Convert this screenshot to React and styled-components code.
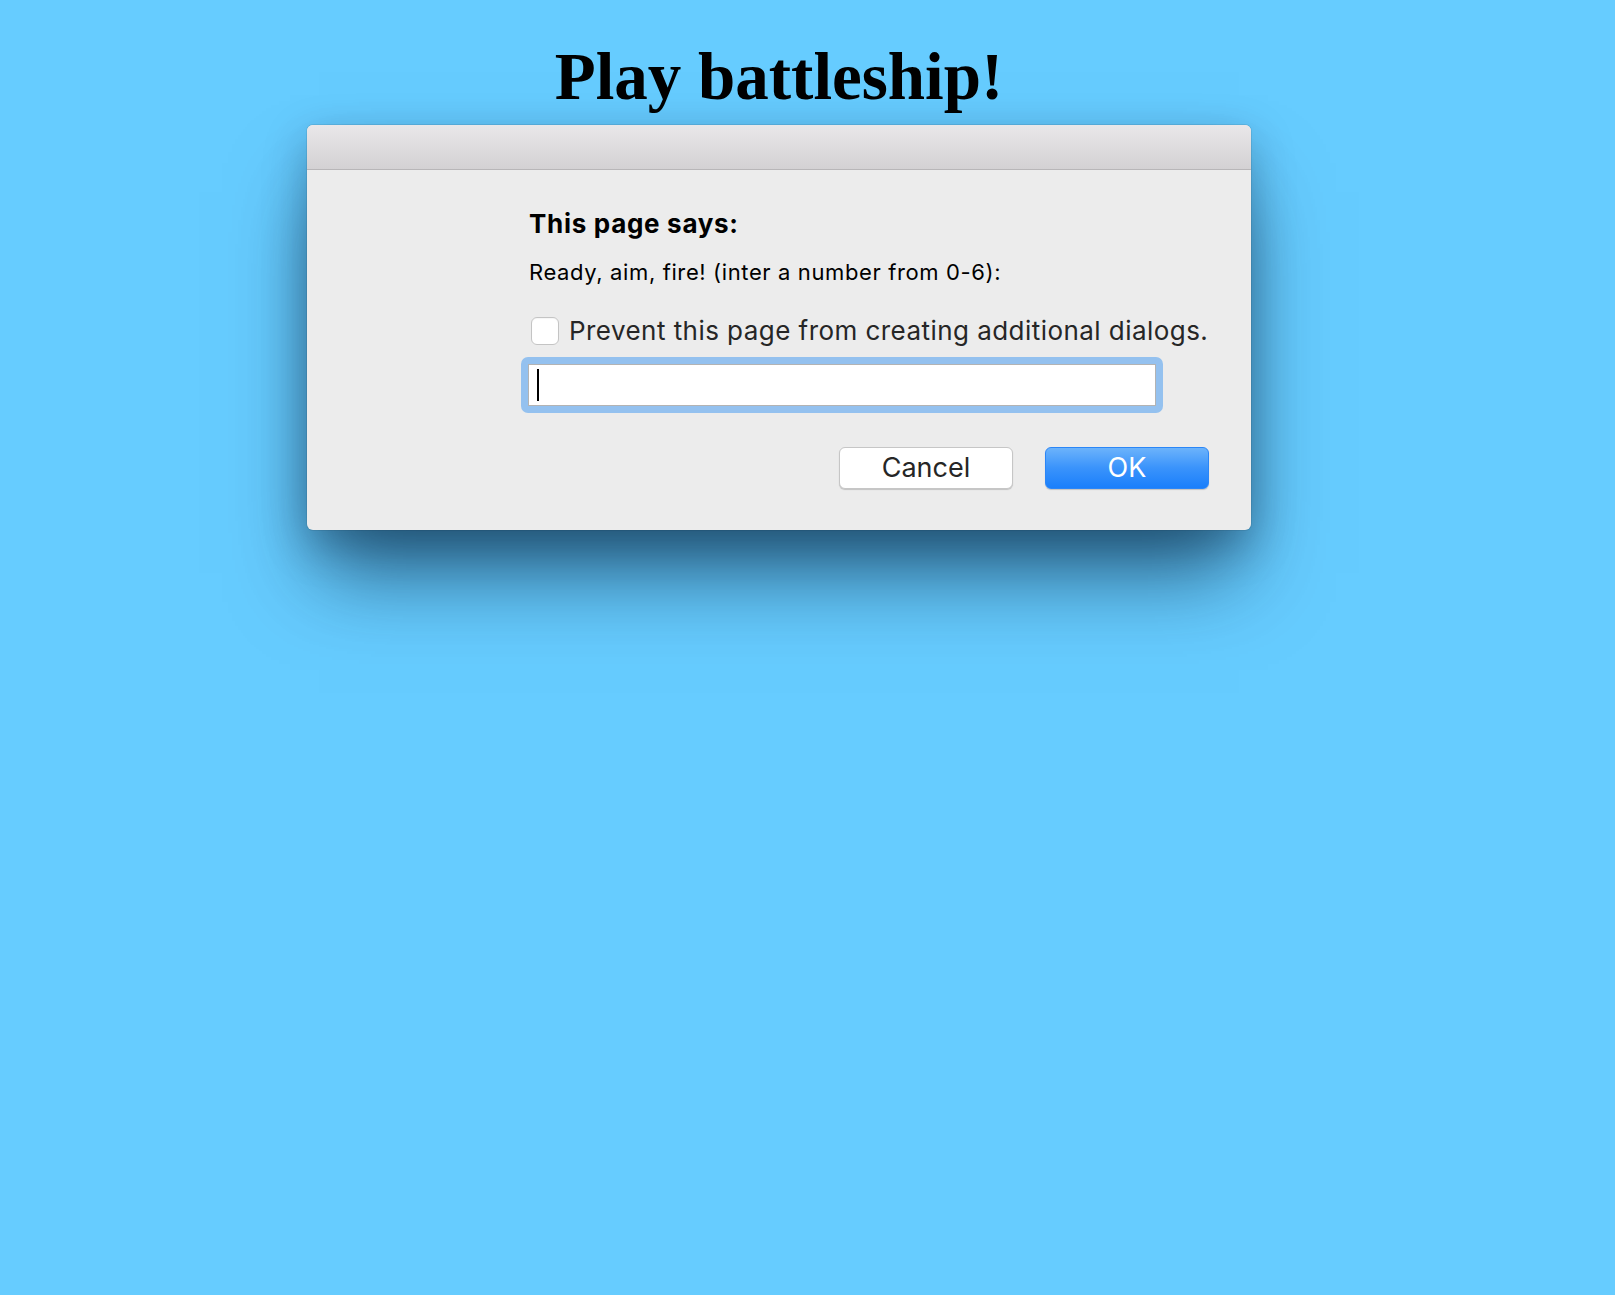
import React from 'react';
import styled, { createGlobalStyle } from 'styled-components';

const GlobalStyle = createGlobalStyle`
  html, body {
    margin: 0;
    padding: 0;
    background: #66ccff;
  }
  body {
    min-height: 100vh;
  }
`;

const Page = styled.div`
  display: flex;
  flex-direction: column;
  align-items: center;
  min-height: 100vh;
  padding: 43px 57px 0 0;
  box-sizing: border-box;
  background: #66ccff;
`;

const Title = styled.h1`
  margin: 0 0 16px;
  font-family: "Liberation Serif", "Times New Roman", serif;
  font-size: 67px;
  font-weight: 700;
  line-height: 66px;
  color: #000;
`;

const Dialog = styled.div`
  width: 944px;
  border-radius: 6px;
  overflow: hidden;
  background: #ececec;
  box-shadow: 0 55px 80px -12px rgba(0, 25, 50, 0.6),
    0 14px 44px rgba(0, 20, 45, 0.28), 0 0 0 1px rgba(0, 0, 0, 0.08);
`;

const TitleBar = styled.div`
  height: 44px;
  background: linear-gradient(to bottom, #e9e7e9 0%, #d3d1d3 100%);
  border-bottom: 1px solid #b8b6b8;
`;

const Body = styled.div`
  display: flex;
  flex-direction: column;
  padding: 39px 42px 41px 222px;
  font-family: Inter, "Liberation Sans", Arial, sans-serif;
  color: #000;
`;

const Heading = styled.div`
  font-size: 26px;
  font-weight: 700;
  line-height: 30px;
  letter-spacing: 0.7px;
`;

const Message = styled.div`
  margin-top: 20px;
  font-size: 22px;
  line-height: 26px;
  letter-spacing: 0.62px;
`;

const CheckRow = styled.label`
  display: flex;
  align-items: center;
  gap: 10px;
  margin-top: 32px;
  height: 28px;
  font-size: 26px;
  line-height: 28px;
  letter-spacing: 0.45px;
  color: #262626;
`;

const Box = styled.span`
  width: 28px;
  height: 28px;
  margin-left: 2px;
  box-sizing: border-box;
  border: 1px solid #c4c4c4;
  border-radius: 6px;
  background: #fff;
  box-shadow: inset 0 1px 1px rgba(0, 0, 0, 0.04);
  flex-shrink: 0;
`;

const FocusRing = styled.div`
  display: flex;
  width: 642px;
  margin: 12px 0 0 -8px;
  padding: 7px;
  box-sizing: border-box;
  border-radius: 7px;
  background: #94c1ef;
`;

const Field = styled.div`
  display: flex;
  align-items: center;
  flex: 1;
  height: 42px;
  padding-left: 8px;
  box-sizing: border-box;
  background: #fff;
  border: 1px solid #b3b3b3;
`;

const Caret = styled.span`
  width: 2px;
  height: 32px;
  background: #000;
`;

const Buttons = styled.div`
  display: flex;
  justify-content: flex-end;
  gap: 32px;
  margin-top: 34px;
`;

const Button = styled.button`
  width: ${(p) => p.$width}px;
  height: 42px;
  padding: 0;
  border-radius: 6px;
  font-family: Inter, "Liberation Sans", Arial, sans-serif;
  font-size: 27px;
  line-height: 40px;
  cursor: pointer;
  color: ${(p) => (p.$primary ? '#ffffff' : '#262626')};
  border: 1px solid ${(p) => (p.$primary ? '#2b86f7' : '#c6c6c6')};
  background: ${(p) =>
    p.$primary
      ? 'linear-gradient(to bottom, #6cb3fb 0%, #3a93fb 50%, #1a7ffb 100%)'
      : '#ffffff'};
  box-shadow: 0 1px 1px rgba(0, 0, 0, 0.18);
`;

export default function App() {
  return (
    <>
      <GlobalStyle />
      <Page>
        <Title>Play battleship!</Title>
        <Dialog>
          <TitleBar />
          <Body>
            <Heading>This page says:</Heading>
            <Message>Ready, aim, fire! (inter a number from 0-6):</Message>
            <CheckRow>
              <Box />
              Prevent this page from creating additional dialogs.
            </CheckRow>
            <FocusRing>
              <Field>
                <Caret />
              </Field>
            </FocusRing>
            <Buttons>
              <Button $width={174}>Cancel</Button>
              <Button $width={164} $primary>
                OK
              </Button>
            </Buttons>
          </Body>
        </Dialog>
      </Page>
    </>
  );
}
